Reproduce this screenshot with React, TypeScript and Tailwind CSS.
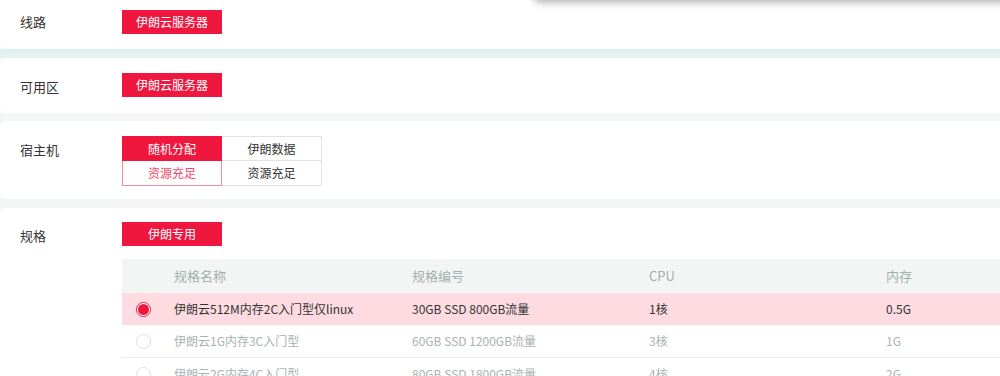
const rows = [
    { name: '伊朗云512M内存2C入门型仅linux', spec: '30GB SSD 800GB流量', cpu: '1核', mem: '0.5G', active: true },
    { name: '伊朗云1G内存3C入门型', spec: '60GB SSD 1200GB流量', cpu: '3核', mem: '1G', active: false },
    { name: '伊朗云2G内存4C入门型', spec: '80GB SSD 1800GB流量', cpu: '4核', mem: '2G', active: false },
]

function RedButton({ label }: { label: string }) {
    return (
        <div className="w-[100px] h-[24px] bg-[#f0173f] text-white text-[12px] flex items-center justify-center">
            {label}
        </div>
    )
}

function Radio({ checked }: { checked: boolean }) {
    if (checked) {
        return (
            <span className="w-[15px] h-[15px] rounded-full border border-[#f0173f] bg-white flex items-center justify-center">
                <span className="w-[11px] h-[11px] rounded-full bg-[#f0173f]" />
            </span>
        )
    }
    return <span className="w-[15px] h-[15px] rounded-full border border-[#dedede] bg-white" />
}

export default function App() {
    return (
        <div
            className="relative w-[1000px] h-[376px] overflow-hidden bg-[#f4f5f5] text-[#333] text-[13px]"
            style={{ fontFamily: '"Noto Sans CJK SC", "Noto Sans", sans-serif' }}
        >
            {/* 线路 */}
            <div className="mt-[-5px] w-[1010px] h-[54px] bg-white rounded-[5px] flex items-start pl-[20px] pt-[15px]">
                <div className="w-[102px] leading-[24px]">线路</div>
                <RedButton label="伊朗云服务器" />
            </div>
            <div className="h-[9px] bg-gradient-to-b from-[#dcefef] to-[#e6f2f2]" />

            {/* 可用区 */}
            <div className="w-[1010px] h-[55px] bg-white rounded-[5px] flex items-start pl-[20px] pt-[15px]">
                <div className="w-[102px] leading-[24px] pt-[2px]">可用区</div>
                <RedButton label="伊朗云服务器" />
            </div>

            {/* 宿主机 */}
            <div className="mt-[8px] w-[1010px] h-[78px] bg-white rounded-[5px] flex items-start pl-[20px] pt-[15px]">
                <div className="w-[102px] leading-[25px] pt-[1px]">宿主机</div>
                <div className="grid grid-cols-[100px_100px] text-[12px]">
                    <div className="h-[25px] bg-[#f0173f] text-white flex items-center justify-center border border-[#f0173f]">随机分配</div>
                    <div className="h-[25px] flex items-center justify-center border border-[#e2e2e2] border-l-0">伊朗数据</div>
                    <div className="h-[25px] flex items-center justify-center border border-[#f58ba0] border-t-0 text-[#f0476a]">资源充足</div>
                    <div className="h-[25px] flex items-center justify-center border border-[#e2e2e2] border-t-0 border-l-0">资源充足</div>
                </div>
            </div>

            {/* 规格 */}
            <div className="mt-[9px] w-[1010px] h-[200px] bg-white rounded-[5px] pl-[20px] pt-[14px]">
                <div className="flex items-start">
                    <div className="w-[102px] leading-[24px] pt-[2px]">规格</div>
                    <RedButton label="伊朗专用" />
                </div>
                <div className="ml-[102px] mt-[11px] text-[12px]">
                    <div className="h-[34px] bg-[#f3f5f4] grid grid-cols-[52px_238px_237px_237px_1fr] items-center text-[13px] text-[#a3afad]">
                        <div />
                        <div>规格名称</div>
                        <div>规格编号</div>
                        <div>CPU</div>
                        <div>内存</div>
                    </div>
                    {rows.map((row) => (
                        <div
                            key={row.name}
                            className={
                                row.active
                                    ? 'h-[32px] bg-[#fddbe1] grid grid-cols-[52px_238px_237px_237px_1fr] items-center text-[#333]'
                                    : 'h-[33px] border-b border-[#eeeeee] grid grid-cols-[52px_238px_237px_237px_1fr] items-center text-[#a9b3b1]'
                            }
                        >
                            <div className="pl-[14px] flex items-center">
                                <Radio checked={row.active} />
                            </div>
                            <div>{row.name}</div>
                            <div>{row.spec}</div>
                            <div>{row.cpu}</div>
                            <div>{row.mem}</div>
                        </div>
                    ))}
                </div>
            </div>

            {/* dropdown edge above the viewport */}
            <div className="absolute top-[-40px] left-[534px] right-[-10px] h-[40px] bg-white rounded-[6px] shadow-[0_2px_8px_rgba(0,0,0,0.35)]" />
        </div>
    )
}
